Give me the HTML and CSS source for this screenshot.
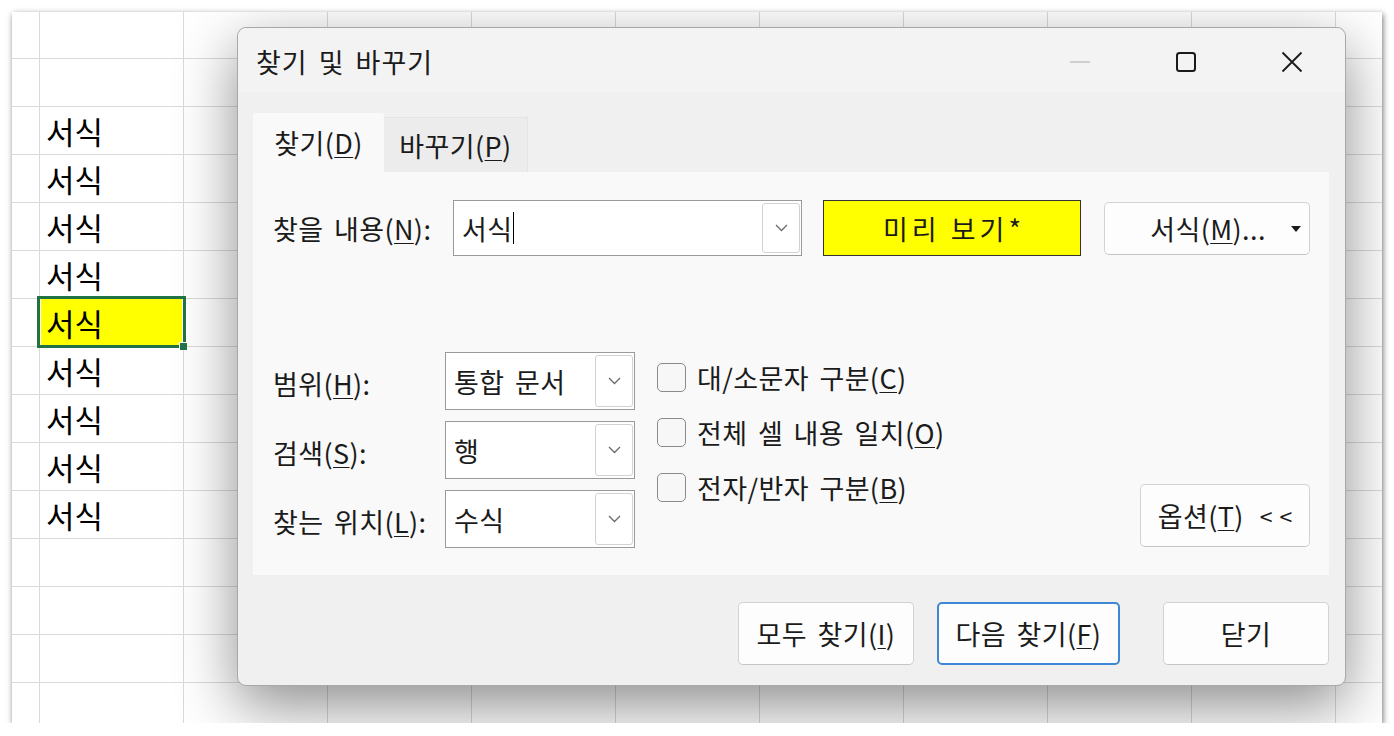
FILE: index.html
```html
<!DOCTYPE html>
<html>
    <head>
        <title>찾기 및 바꾸기</title>
        <link rel="stylesheet" href="styles.css">
    </head>
    <body>
        <div class='sheet'>
            <div class='cells'>
                <div class='cell'>서식</div>
                <div class='cell'>서식</div>
                <div class='cell'>서식</div>
                <div class='cell'>서식</div>
                <div class='cell active'>서식</div>
                <div class='cell'>서식</div>
                <div class='cell'>서식</div>
                <div class='cell'>서식</div>
                <div class='cell'>서식</div>
            </div>

            <div class='dialog'>
                <div class='titleBar'>
                    <span class='titleText'>찾기 및 바꾸기</span>
                    <div class='caption'>
                        <div class='capBtn'>
                            <svg width='22' height='4' viewBox='0 0 22 4'><path d='M1 2h20' stroke='#c4c4c4' stroke-width='1.6'/></svg>
                        </div>
                        <div class='capBtn'>
                            <svg width='22' height='22' viewBox='0 0 22 22'><rect x='2' y='2' width='18' height='18' rx='2.5' fill='none' stroke='#1a1a1a' stroke-width='2'/></svg>
                        </div>
                        <div class='capBtn'>
                            <svg width='22' height='22' viewBox='0 0 22 22'><path d='M1.5 1.5l19 19M20.5 1.5l-19 19' stroke='#1a1a1a' stroke-width='1.8'/></svg>
                        </div>
                    </div>
                </div>

                <div class='dialogBody'>
                    <div class='tabs'>
                        <div class='tab selected'>찾기(<u>D</u>)</div>
                        <div class='tab'>바꾸기(<u>P</u>)</div>
                    </div>

                    <div class='panel'>
                        <div class='findRow'>
                            <label class='findLabel'>찾을 내용(<u>N</u>):</label>
                            <div class='combo findCombo'>
                                <span class='comboText'>서식<span class='caret'></span></span>
                                <div class='dropBtn'>
                                    <svg width='13' height='8' viewBox='0 0 13 8'><polyline points='1,1 6.5,6.5 12,1' fill='none' stroke='#6a6a6a' stroke-width='1.3'/></svg>
                                </div>
                            </div>
                            <div class='preview'>미리 보기*</div>
                            <div class='btn formatBtn'>
                                <span>서식(<u>M</u>)...</span>
                                <svg class='arrowDown' width='10' height='6' viewBox='0 0 10 6'><path d='M0 0h10L5 6z' fill='#1a1a1a'/></svg>
                            </div>
                        </div>

                        <div class='options'>
                            <div class='scopeGrid'>
                                <label>범위(<u>H</u>):</label>
                                <div class='combo'>
                                    <span class='comboText'>통합 문서</span>
                                    <div class='dropBtn'>
                                        <svg width='13' height='8' viewBox='0 0 13 8'><polyline points='1,1 6.5,6.5 12,1' fill='none' stroke='#6a6a6a' stroke-width='1.3'/></svg>
                                    </div>
                                </div>
                                <label>검색(<u>S</u>):</label>
                                <div class='combo'>
                                    <span class='comboText'>행</span>
                                    <div class='dropBtn'>
                                        <svg width='13' height='8' viewBox='0 0 13 8'><polyline points='1,1 6.5,6.5 12,1' fill='none' stroke='#6a6a6a' stroke-width='1.3'/></svg>
                                    </div>
                                </div>
                                <label>찾는 위치(<u>L</u>):</label>
                                <div class='combo'>
                                    <span class='comboText'>수식</span>
                                    <div class='dropBtn'>
                                        <svg width='13' height='8' viewBox='0 0 13 8'><polyline points='1,1 6.5,6.5 12,1' fill='none' stroke='#6a6a6a' stroke-width='1.3'/></svg>
                                    </div>
                                </div>
                            </div>

                            <div class='checks'>
                                <div class='check'><span class='box'></span>대/소문자 구분(<u>C</u>)</div>
                                <div class='check'><span class='box'></span>전체 셀 내용 일치(<u>O</u>)</div>
                                <div class='check'><span class='box'></span>전자/반자 구분(<u>B</u>)</div>
                            </div>

                            <div class='btn optionsBtn'>옵션(<u>T</u>)<span class='chevrons'>&lt;&lt;</span></div>
                        </div>
                    </div>

                    <div class='footer'>
                        <div class='btn findAll'>모두 찾기(<u>I</u>)</div>
                        <div class='btn findNext default'>다음 찾기(<u>F</u>)</div>
                        <div class='btn closeBtn'>닫기</div>
                    </div>
                </div>
            </div>
        </div>
    </body>
</html>
```

FILE: styles.css
```css
html, body {
    margin: 0;
    background: #fff;
    font-family: "Noto Sans CJK KR", "Noto Sans", sans-serif;
    color: #1b1b1b;
}
u {
    text-decoration-thickness: 1px;
    text-underline-offset: 3px;
}

/* worksheet behind the dialog */
.sheet {
    position: relative;
    margin: 12px 0 0 12px;
    width: 1370px;
    height: 711px;
    overflow: hidden;
    background-color: #fff;
    background-image:
        linear-gradient(to right, #dadada 1px, transparent 1px),
        linear-gradient(to bottom, #dadada 1px, transparent 1px);
    background-size: 144px 100%, 100% 48px;
    background-position: 27px 0, 0 46px;
    box-shadow: 1px 2px 6px rgba(0, 0, 0, 0.55);
}
.cells {
    display: flex;
    flex-direction: column;
    margin: 94px 0 0 28px;
    width: 143px;
}
.cell {
    height: 48px;
    padding-left: 6px;
    display: flex;
    align-items: center;
    font-size: 31px;
    line-height: 1;
    color: #000;
}
.cell.active {
    position: relative;
    background: #ffff00;
    box-shadow: inset 0 0 0 1px #fff;
}
.cell.active::after {
    content: '';
    position: absolute;
    left: -3px;
    top: -2px;
    right: -3px;
    bottom: -2px;
    border: 3px solid #217346;
}
.cell.active::before {
    content: '';
    position: absolute;
    right: -4px;
    bottom: -4px;
    width: 7px;
    height: 7px;
    background: #217346;
    border-left: 1px solid #fff;
    border-top: 1px solid #fff;
    z-index: 1;
}

/* dialog window */
.dialog {
    position: absolute;
    left: 225px;
    top: 15px;
    width: 1109px;
    height: 659px;
    box-sizing: border-box;
    border: 1px solid #a8a8a8;
    border-radius: 9px;
    background: #f0f0f0;
    box-shadow: 0 20px 60px rgba(0, 0, 0, 0.45);
    display: flex;
    flex-direction: column;
    font-size: 27px;
    letter-spacing: 0.4px;
    word-spacing: 4px;
}
.titleBar {
    height: 64px;
    display: flex;
    align-items: center;
    padding-left: 18px;
    background: #f3f3f3;
    border-radius: 9px 9px 0 0;
}
.titleText {
    font-size: 27px;
    margin-top: 2px;
    letter-spacing: 1px;
}
.caption {
    display: flex;
    margin-left: auto;
    height: 100%;
}
.capBtn {
    width: 106px;
    display: flex;
    align-items: center;
    justify-content: center;
    margin-top: 4px;
}
.dialogBody {
    padding: 21px 16px 0 15px;
    display: flex;
    flex-direction: column;
}

.tabs {
    display: flex;
    align-items: flex-end;
    height: 59px;
}
.tab {
    height: 55px;
    width: 144px;
    box-sizing: border-box;
    display: flex;
    align-items: center;
    justify-content: center;
    background: #ececec;
    border-top: 1px solid #e4e4e4;
    border-right: 1px solid #e4e4e4;
}
.tab.selected {
    height: 59px;
    width: 131px;
    background: #f9f9f9;
    border: none;
    border-radius: 3px 3px 0 0;
}

.panel {
    height: 403px;
    box-sizing: border-box;
    background: #f9f9f9;
    padding: 28px 19px 0 20px;
    display: flex;
    flex-direction: column;
}
.findRow {
    display: flex;
    align-items: center;
    height: 56px;
}
.findLabel {
    width: 180px;
    white-space: nowrap;
}

.combo {
    position: relative;
    box-sizing: border-box;
    height: 58px;
    width: 190px;
    background: #fff;
    border: 1px solid #9a9a9a;
    display: flex;
    align-items: center;
}
.findCombo {
    width: 349px;
    height: 56px;
}
.comboText {
    padding-left: 8px;
    flex-grow: 1;
    display: flex;
    align-items: center;
    white-space: nowrap;
}
.caret {
    display: inline-block;
    width: 1px;
    height: 32px;
    background: #000;
    margin-left: 1px;
}
.dropBtn {
    width: 38px;
    flex-shrink: 0;
    align-self: stretch;
    margin: 2px 1px 2px 0;
    box-sizing: border-box;
    border: 1px solid #d2d2d2;
    border-radius: 3px;
    display: flex;
    align-items: center;
    justify-content: center;
}

.preview {
    margin-left: 21px;
    width: 258px;
    height: 56px;
    box-sizing: border-box;
    background: #ffff00;
    border: 1px solid #333;
    display: flex;
    align-items: center;
    justify-content: center;
    letter-spacing: 4px;
    word-spacing: 0;
    padding-left: 4px;
}

.btn {
    box-sizing: border-box;
    background: #fdfdfd;
    border: 1px solid #d3d3d3;
    border-bottom-color: #c4c4c4;
    border-radius: 5px;
    display: flex;
    align-items: center;
    justify-content: center;
    white-space: nowrap;
}
.formatBtn {
    margin-left: 23px;
    width: 206px;
    height: 53px;
    position: relative;
}
.formatBtn span {
    margin-left: 2px;
}
.arrowDown {
    position: absolute;
    right: 8px;
    top: 23px;
}

.options {
    display: flex;
    margin-top: 96px;
    height: 196px;
}
.scopeGrid {
    display: grid;
    grid-template-columns: 172px 190px;
    grid-auto-rows: 58px;
    row-gap: 11px;
    align-items: center;
}
.scopeGrid label {
    margin-top: 4px;
    white-space: nowrap;
}
.checks {
    margin-left: 22px;
    padding-top: 5px;
    display: flex;
    flex-direction: column;
    gap: 15px;
}
.check {
    height: 40px;
    display: flex;
    align-items: center;
    white-space: nowrap;
}
.box {
    width: 29px;
    height: 29px;
    flex-shrink: 0;
    box-sizing: border-box;
    border: 1.5px solid #8a8a8a;
    border-radius: 5px;
    background: #f7f7f7;
    margin-right: 11px;
}
.optionsBtn {
    margin-left: auto;
    align-self: flex-end;
    width: 170px;
    height: 63px;
    margin-bottom: 1px;
}
.chevrons {
    letter-spacing: 7px;
    margin-left: 16px;
    margin-right: -7px;
    font-size: 23px;
}

.footer {
    display: flex;
    margin-top: 27px;
    padding-left: 485px;
}
.footer .btn {
    height: 63px;
}
.findAll {
    width: 177px;
}
.findNext {
    width: 184px;
    margin-left: 23px;
}
.findNext.default {
    border: 2px solid #3d87d4;
}
.closeBtn {
    width: 167px;
    margin-left: 43px;
}
```
